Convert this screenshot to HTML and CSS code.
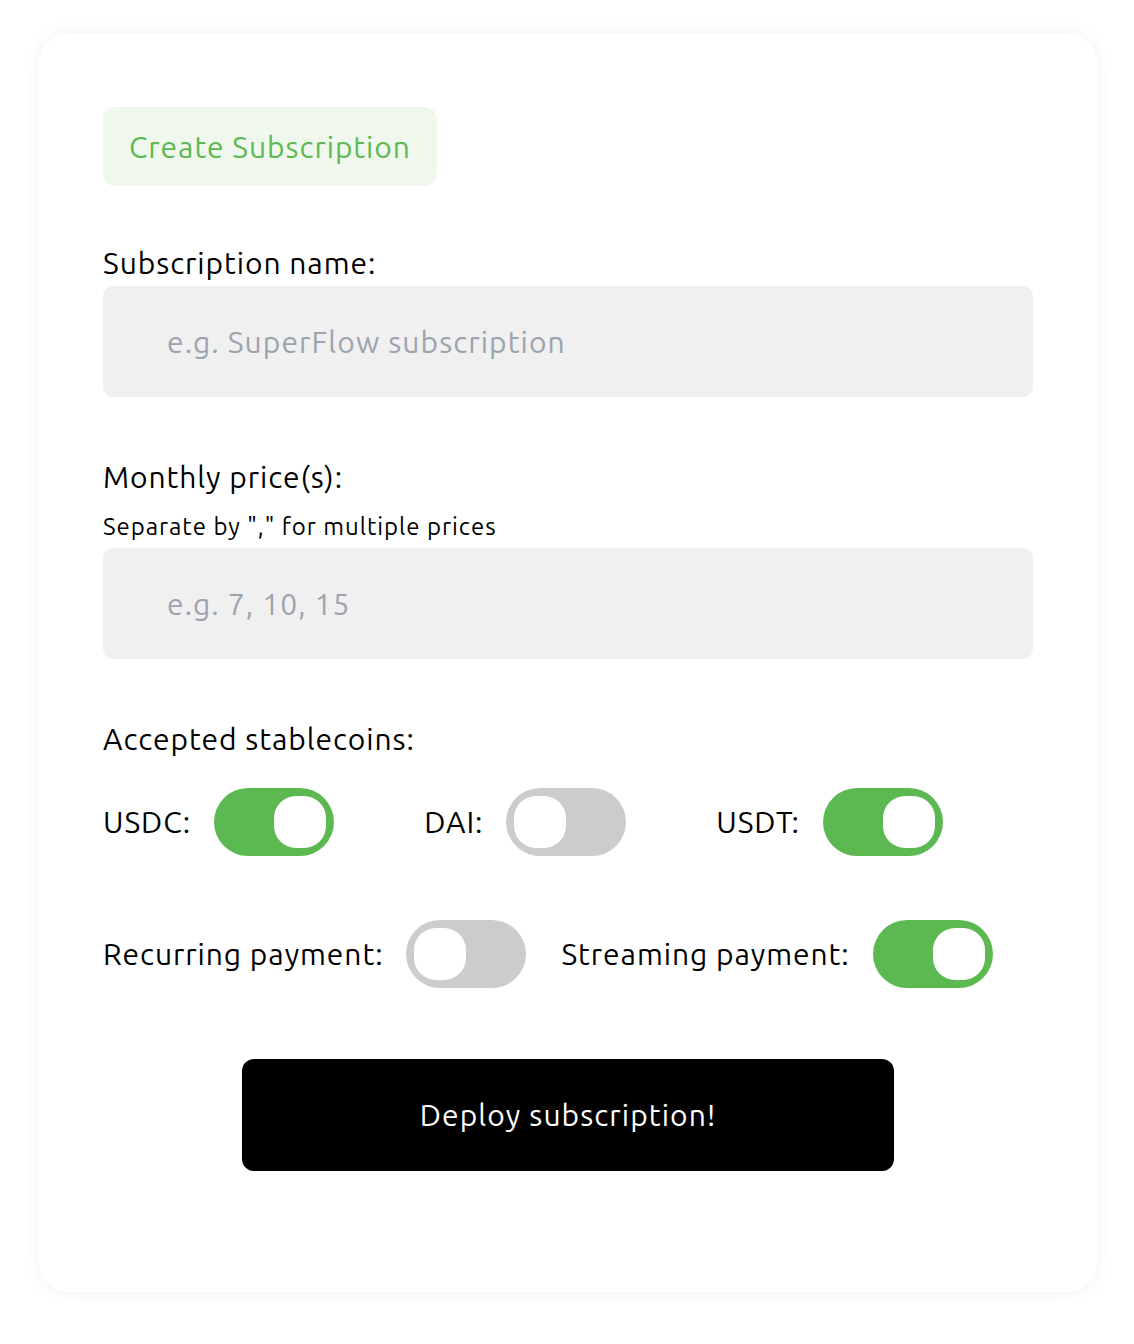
FILE: index.html
```html
<!DOCTYPE html>
<html lang="en">
<head>
<meta charset="utf-8">
<title>Create Subscription</title>
<link rel="stylesheet" href="styles.css">
</head>
<body>
<main class="card">
  <div class="badge">Create Subscription</div>

  <label class="label label-first" for="name">Subscription name:</label>
  <input id="name" class="field" type="text" placeholder="e.g. SuperFlow subscription">

  <label class="label label-gap" for="price">Monthly price(s):</label>
  <div class="hint">Separate by "," for multiple prices</div>
  <input id="price" class="field" type="text" placeholder="e.g. 7, 10, 15">

  <div class="label label-gap">Accepted stablecoins:</div>
  <div class="row row-coins">
    <div class="opt"><span class="opt-label">USDC:</span><span class="toggle on"><span class="knob"></span></span></div>
    <div class="opt"><span class="opt-label">DAI:</span><span class="toggle"><span class="knob"></span></span></div>
    <div class="opt"><span class="opt-label">USDT:</span><span class="toggle on"><span class="knob"></span></span></div>
  </div>

  <div class="row row-pay">
    <div class="opt"><span class="opt-label">Recurring payment:</span><span class="toggle"><span class="knob"></span></span></div>
    <div class="opt"><span class="opt-label">Streaming payment:</span><span class="toggle on"><span class="knob"></span></span></div>
  </div>

  <div class="actions">
    <button class="deploy" type="button">Deploy subscription!</button>
  </div>
</main>
</body>
</html>
```

FILE: styles.css
```css
* { box-sizing: border-box; }

html, body {
  margin: 0;
  background: #ffffff;
}

body {
  padding: 33px 37px 52px 39px;
  font-family: "Ubuntu", "Noto Sans", "Open Sans", sans-serif;
  letter-spacing: 0.058em;
  color: #000;
}

.card {
  width: 1058px;
  height: 1259px;
  background: #fff;
  border-radius: 30px;
  box-shadow: 0 0 18px rgba(0, 0, 0, 0.06);
  padding: 74px 64px 0 64px;
  display: flex;
  flex-direction: column;
  align-items: flex-start;
}

.badge {
  height: 79px;
  padding: 0 26px;
  display: flex;
  align-items: center;
  background: #f0f8ee;
  color: #5cb951;
  border-radius: 12px;
  font-size: 30px;
}

.label {
  display: block;
  font-size: 30px;
  line-height: 45px;
}

.label-first { margin-top: 55px; }
.label-gap { margin-top: 58px; }

.hint {
  font-size: 24px;
  line-height: 36px;
  letter-spacing: 0.040em;
  margin-top: 9px;
  margin-bottom: 3px;
}

.field {
  width: 930px;
  height: 111px;
  border: none;
  outline: none;
  background: #f0f0f0;
  border-radius: 10px;
  padding: 0 64px;
  font-family: inherit;
  font-size: 30px;
  letter-spacing: 0.036em;
  color: #000;
}

.field::placeholder { color: #9ca3af; }

.row {
  display: flex;
  align-items: center;
}

.row-coins { margin-top: 26px; gap: 90px; }
.row-pay { margin-top: 64px; gap: 35px; }

.opt {
  display: flex;
  align-items: center;
  gap: 23px;
}

.opt-label {
  font-size: 30px;
  line-height: 45px;
}

.toggle {
  width: 120px;
  height: 68px;
  border-radius: 34px;
  background: #cccccc;
  padding: 8px;
  display: flex;
  justify-content: flex-start;
}

.toggle.on {
  background: #5cb951;
  justify-content: flex-end;
}

.knob {
  width: 52px;
  height: 52px;
  border-radius: 22px;
  background: #fff;
}

.actions {
  align-self: stretch;
  display: flex;
  justify-content: center;
  margin-top: 71px;
}

.deploy {
  width: 652px;
  height: 112px;
  background: #000;
  color: #fff;
  border: none;
  border-radius: 12px;
  font-family: inherit;
  font-size: 30px;
  letter-spacing: 0.036em;
}
```
